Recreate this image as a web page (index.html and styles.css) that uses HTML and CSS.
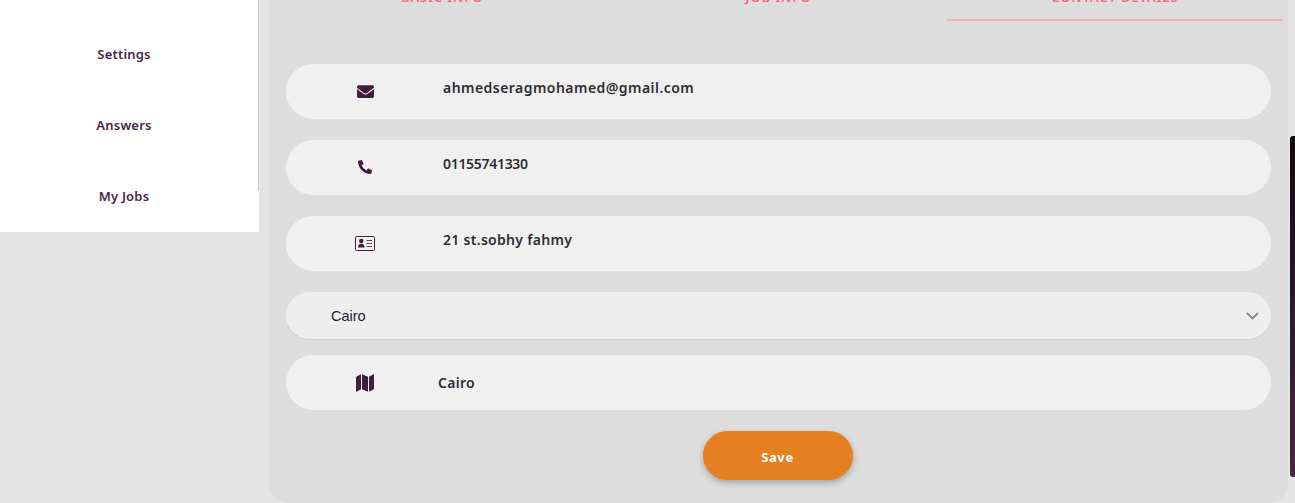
FILE: index.html
```html
<!DOCTYPE html>
<html lang="en">
<head>
  <meta charset="UTF-8">
  <meta name="viewport" content="width=device-width, initial-scale=1.0">
  <title>Contact details</title>
  <link rel="stylesheet" href="styles.css">
</head>
<body>
  <div class="container">
    <div class="sidebar">
      <a class="side-link">Settings</a>
      <a class="side-link">Answers</a>
      <a class="side-link">My Jobs</a>
    </div>
    <div class="main">
      <div class="tabs">
        <div class="tab">BASIC INFO</div>
        <div class="tab">JOB INFO</div>
        <div class="tab active">CONTACT DETAILS</div>
      </div>

      <div class="field">
        <div class="field-icon">
          <svg class="icon" width="17" height="17" viewBox="0 0 512 512"><path d="M502.3 190.8c3.9-3.1 9.7-.2 9.7 4.7V400c0 26.5-21.5 48-48 48H48c-26.5 0-48-21.5-48-48V195.6c0-5 5.7-7.8 9.7-4.7 22.4 17.4 52.1 39.5 154.1 113.6 21.1 15.4 56.7 47.8 92.2 47.6 35.7.3 72-32.8 92.3-47.6 102-74.1 131.6-96.3 154-113.7zM256 320c23.2.4 56.6-29.2 73.4-41.4 132.7-96.3 142.8-104.7 173.4-128.7 5.8-4.5 9.2-11.5 9.2-18.9v-19c0-26.5-21.5-48-48-48H48C21.5 64 0 85.5 0 112v19c0 7.4 3.4 14.3 9.2 18.9 30.6 23.9 40.7 32.4 173.4 128.7 16.8 12.2 50.2 41.8 73.4 41.4z"/></svg>
        </div>
        <span class="field-text">ahmedseragmohamed@gmail.com</span>
      </div>

      <div class="field">
        <div class="field-icon">
          <svg class="icon phone" width="14" height="14" viewBox="0 0 512 512"><path d="M497.39 361.8l-112-48a24 24 0 0 0-28 6.9l-49.6 60.6A370.66 370.66 0 0 1 130.6 204.11l60.6-49.6a23.94 23.94 0 0 0 6.9-28l-48-112A24.16 24.16 0 0 0 122.6.61l-104 24A24 24 0 0 0 0 48c0 256.5 207.9 464 464 464a24 24 0 0 0 23.4-18.6l24-104a24.29 24.29 0 0 0-14.01-27.6z"/></svg>
        </div>
        <span class="field-text digits">01155741330</span>
      </div>

      <div class="field">
        <div class="field-icon">
          <svg class="icon" width="20" height="15" viewBox="0 0 20 15">
            <rect x="0.5" y="0.5" width="19" height="14" rx="1" fill="none" stroke="#3f1f3c"/>
            <circle cx="6.3" cy="5" r="2.2"/>
            <path d="M3 11.500c0-2.400 1.200-3.700 3.300-3.700s3.300 1.300 3.300 3.700z"/>
            <path d="M11.500 4h5.500v1h-5.500zM11.500 7h5.500v1h-5.500zM11.500 10h5.500v1h-5.500z" fill="#5e4a5c"/>
          </svg>
        </div>
        <span class="field-text address">21 st.sobhy fahmy</span>
      </div>

      <div class="field-select">
        <span>Cairo</span>
        <svg class="chevron" width="13" height="8" viewBox="0 0 13 8"><path d="M1 1l5.500 5.500L12 1" fill="none" stroke="#888" stroke-width="1.800"/></svg>
      </div>

      <div class="field field-last">
        <div class="field-icon">
          <svg class="icon" width="18" height="20" viewBox="0 0 576 512" preserveAspectRatio="none"><path d="M0 117.660v346.320c0 11.320 11.430 19.060 21.940 14.860L160 416V32L20.120 87.950A32.006 32.006 0 0 0 0 117.660zM192 416l192 64V96L192 32v384zM554.060 33.160L416 96v384l139.880-55.950A31.996 31.996 0 0 0 576 394.340V48.020c0-11.320-11.430-19.060-21.940-14.860z"/></svg>
        </div>
        <span class="field-text city">Cairo</span>
      </div>

      <div class="actions">
        <button class="save-btn">Save</button>
      </div>
    </div>
  </div>
  <div class="scroll-strip"></div>
</body>
</html>
```

FILE: styles.css
```css
body {
  font-family: "Noto Sans", Arial, sans-serif;
  margin: 0;
  padding: 0;
  height: 503px;
  overflow: hidden;
  background-color: #e4e4e4;
}
.container {
  display: flex;
  align-items: flex-start;
}
.sidebar {
  width: 259px;
  height: 232px;
  box-sizing: border-box;
  padding-top: 18px;
  background: linear-gradient(#cfcfcf, #cfcfcf) right top / 1px 191px no-repeat #fff;
}
.side-link {
  display: flex;
  align-items: center;
  justify-content: center;
  width: 248px;
  height: 71px;
  font-size: 13px;
  font-weight: 600;
  letter-spacing: 0.2px;
  color: #4a2545;
}
.main {
  width: 1019px;
  height: 516px;
  box-sizing: border-box;
  margin-left: 10px;
  margin-top: -13px;
  padding: 0 17px;
  background-color: #dddddd;
  border-radius: 0 0 20px 20px;
}
.tabs {
  display: flex;
  margin: 0 -12px 43px;
}
.tab {
  flex: 1;
  height: 34px;
  box-sizing: border-box;
  padding-bottom: 12px;
  border-bottom: 2px solid transparent;
  line-height: 20px;
  text-align: center;
  font-size: 13px;
  font-weight: 600;
  letter-spacing: 0.9px;
  color: #f56c77;
}
.tab.active {
  border-bottom-color: #ffaeb4;
}
.field {
  display: flex;
  align-items: center;
  height: 55px;
  margin-bottom: 21px;
  background-color: #f0f0f0;
  border-radius: 28px;
}
.field-icon {
  display: flex;
  justify-content: center;
  flex: none;
  width: 158px;
}
.icon {
  fill: #3f1f3c;
  display: block;
}
.icon.phone {
  margin-top: -1px;
}
.field-text {
  margin-left: -1px;
  padding-bottom: 9px;
  font-size: 14px;
  font-weight: 600;
  letter-spacing: 0.46px;
  color: #2f2d33;
}
.field-text.digits {
  letter-spacing: -0.3px;
}
.field-text.address {
  letter-spacing: 0.3px;
}
.field-text.city {
  margin-left: -6px;
  padding-bottom: 0;
  letter-spacing: 0.3px;
}
.field-select {
  display: flex;
  align-items: center;
  justify-content: space-between;
  height: 47px;
  margin-bottom: 16px;
  padding: 0 12px 0 45px;
  background-color: #eeeeee;
  border-radius: 24px;
  box-shadow: 0 1px 1px #cfcfcf;
  font-family: "Liberation Sans", Arial, sans-serif;
  font-size: 14.5px;
  color: #1f1a2e;
}
.field-last {
  margin-bottom: 21px;
}
.actions {
  display: flex;
  justify-content: center;
  padding-right: 2px;
}
.save-btn {
  width: 150px;
  height: 49px;
  padding-top: 3px;
  border: 0;
  border-radius: 25px;
  background-color: #e67e22;
  box-shadow: 0 3px 6px rgba(0, 0, 0, 0.25);
  font-family: "Noto Sans", Arial, sans-serif;
  font-size: 13px;
  font-weight: 700;
  letter-spacing: 0.6px;
  color: #fff;
}
.scroll-strip {
  position: absolute;
  top: 136px;
  right: 0;
  width: 5px;
  height: 341px;
  border-radius: 3px 0 0 3px;
  background: linear-gradient(#0f0a0e, #4a2545);
}
```
